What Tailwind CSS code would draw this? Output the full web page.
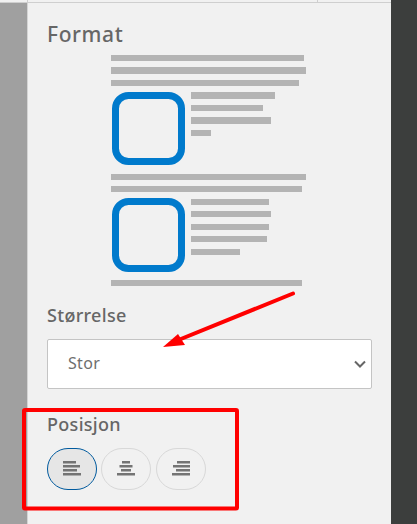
<!DOCTYPE html>
<html>
<head>
<meta charset="utf-8">
<script src="https://cdn.jsdelivr.net/npm/@tailwindcss/browser@4"></script>
</head>
<body class="m-0 overflow-hidden">
<div class="relative flex h-[524px] w-[417px] flex-col font-['Noto_Sans',sans-serif] bg-[#f1f1f1]">
  <div class="relative mt-[2px] mr-[26px] h-px shrink-0 bg-[#cfcfcf]">
    <div class="absolute left-[27px] top-[-2px] h-[2px] w-px bg-[#cfcfcf]"></div>
    <div class="absolute left-[317px] top-[-2px] h-[2px] w-px bg-[#cfcfcf]"></div>
  </div>
  <div class="flex flex-1">
    <div class="w-[27px] shrink-0 bg-[#a0a0a0]"></div>
    <main class="flex w-[364px] shrink-0 flex-col border-l border-[#d4d4d4] pl-[19px] pr-[19px]">
      <h2 class="mt-[17px] h-[28px] text-[21px] leading-[28px] font-medium tracking-[0.6px] text-[#666666]">Format</h2>
      <svg class="ml-[64px] mt-[7px] block" width="200" height="234" viewBox="111 55 200 234">
        <g fill="#b4b4b4">
          <rect x="111" y="55" width="193" height="6"/>
          <rect x="111" y="67" width="195" height="7"/>
          <rect x="111" y="80" width="188" height="6"/>
          <rect x="191" y="92" width="84" height="7"/>
          <rect x="191" y="105" width="72" height="6"/>
          <rect x="191" y="117" width="80" height="7"/>
          <rect x="191" y="130" width="20" height="6"/>
          <rect x="111" y="174" width="195" height="6"/>
          <rect x="111" y="186" width="191" height="6"/>
          <rect x="191" y="199" width="78" height="6"/>
          <rect x="191" y="211" width="80" height="6"/>
          <rect x="191" y="224" width="78" height="6"/>
          <rect x="191" y="236" width="76" height="6"/>
          <rect x="191" y="249" width="49" height="6"/>
          <rect x="111" y="280" width="191" height="6"/>
        </g>
        <g fill="none" stroke="#007acc" stroke-width="7">
          <rect x="115.500" y="95.500" width="66" height="66" rx="13"/>
          <rect x="115.500" y="201.500" width="66" height="67" rx="13"/>
        </g>
      </svg>
      <label class="mt-[12px] h-[28px] text-[18px] leading-[28px] font-medium tracking-[0.3px] text-[#666666]">Størrelse</label>
      <div class="relative mt-[10px] h-[50px] w-[325px]">
        <select class="h-full w-full appearance-none rounded-[2px] border border-[#c4c4c4] bg-white pb-[2px] pl-[20px] text-[16px] tracking-[0.3px] text-[#6e6e6e]">
          <option>Stor</option>
        </select>
        <svg class="pointer-events-none absolute right-[6px] top-[21px]" width="12" height="8" viewBox="0 0 12 8"><path d="M1 1.500 6 6.500 11 1.500" fill="none" stroke="#666666" stroke-width="2"/></svg>
      </div>
      <label class="mt-[21px] h-[28px] text-[18px] leading-[28px] font-medium tracking-[0.3px] text-[#666666]">Posisjon</label>
      <div class="mt-[10px] flex">
        <button class="flex h-[42px] w-[50px] items-center justify-center rounded-[21px] border border-[#005a9e] bg-[#e6e6e6] pb-[1px]">
          <svg width="18" height="15" viewBox="0 0 18 15" fill="#747474"><rect x="0" y="0" width="13" height="2.500"/><rect x="0" y="4" width="17" height="2.500"/><rect x="0" y="8" width="14" height="2.500"/><rect x="0" y="12" width="18" height="2.500"/></svg>
        </button>
        <button class="ml-[4px] flex h-[42px] w-[50px] items-center justify-center rounded-[21px] border border-[#d8d8d8] pb-[1px]">
          <svg width="18" height="15" viewBox="0 0 18 15" fill="#747474"><rect x="5" y="0" width="8" height="2.500"/><rect x="2.500" y="4" width="13" height="2.500"/><rect x="4" y="8" width="10" height="2.500"/><rect x="0" y="12" width="18" height="2.500"/></svg>
        </button>
        <button class="ml-[5px] flex h-[42px] w-[50px] items-center justify-center rounded-[21px] border border-[#d8d8d8] pb-[1px]">
          <svg width="18" height="15" viewBox="0 0 18 15" fill="#747474"><rect x="5" y="0" width="13" height="2.500"/><rect x="1" y="4" width="17" height="2.500"/><rect x="4" y="8" width="14" height="2.500"/><rect x="0" y="12" width="18" height="2.500"/></svg>
        </button>
      </div>
    </main>
    <div class="flex-1 bg-[#3c3e3d]"></div>
  </div>
  <div class="absolute right-0 top-0 h-[3px] w-[26px] bg-[#3c3e3d]"></div>
  <svg class="pointer-events-none absolute left-0 top-0" width="417" height="524" viewBox="0 0 417 524">
    <path d="M293 293.500 176 341" stroke="#ff0000" stroke-width="4" stroke-linecap="round" fill="none"/>
    <path d="M163 347 178 334 185 345Z" fill="#ff0000"/>
    <rect x="24" y="410" width="213" height="98.500" rx="1" fill="none" stroke="#ff0000" stroke-width="4"/>
  </svg>
</div>
</body>
</html>
